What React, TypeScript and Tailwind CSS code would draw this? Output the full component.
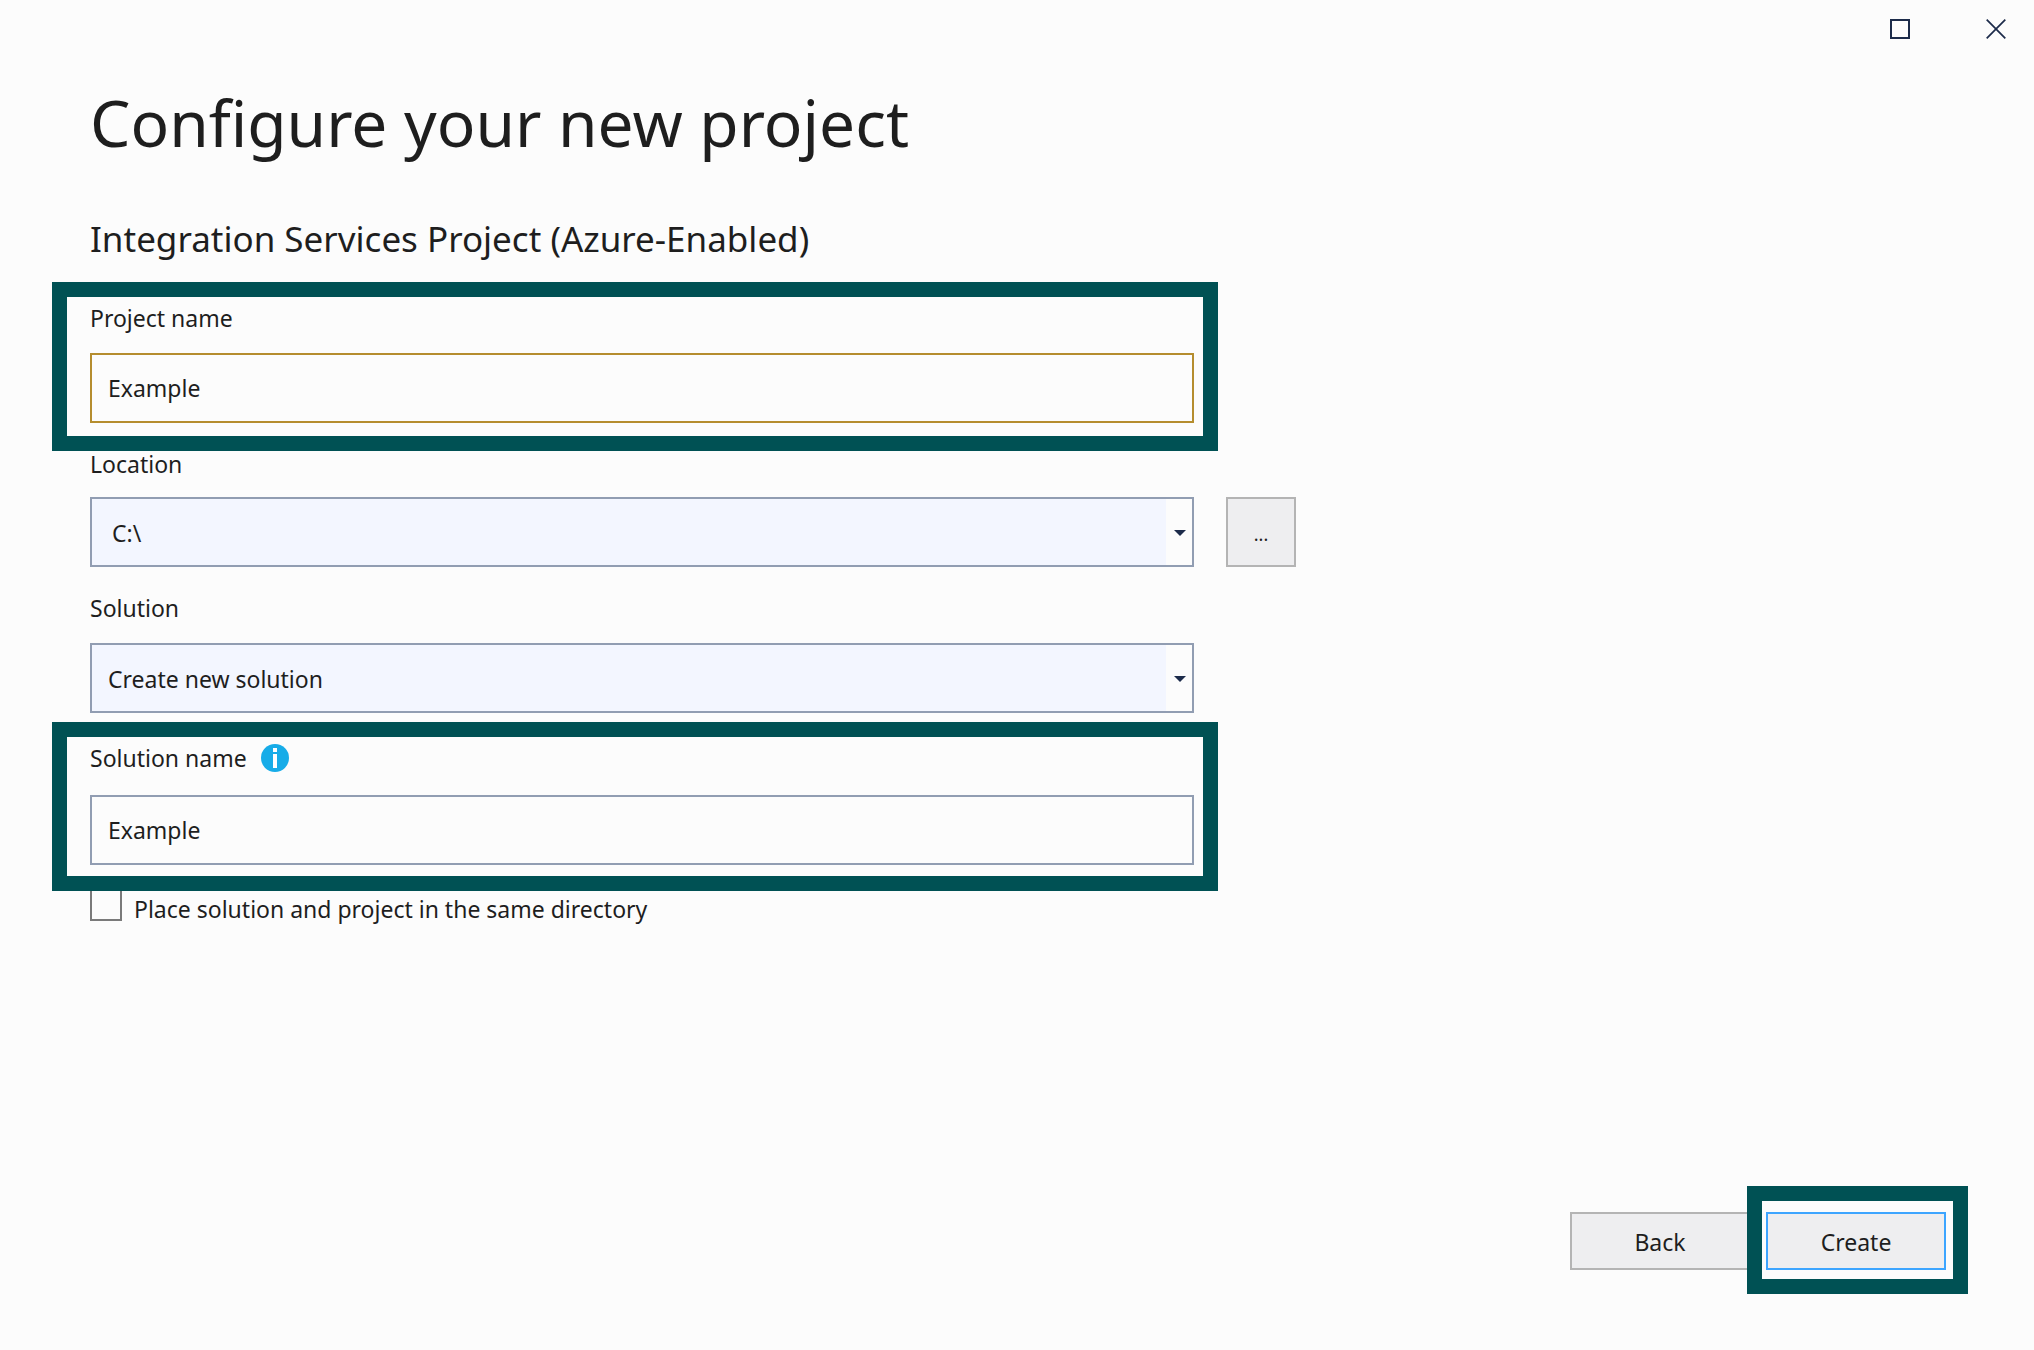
import React, { useState } from 'react'
import clsx from 'clsx'

const Highlight = ({ className }: { className: string }) => (
  <div
    aria-hidden="true"
    className={clsx('pointer-events-none absolute border-[15px] border-[#005154]', className)}
  />
)

const InfoIcon = () => (
  <svg width="28" height="28" viewBox="0 0 28 28" aria-hidden="true">
    <circle cx="14" cy="14" r="14" fill="#17ace8" />
    <path d="M12 4h4v4h-4zM12 10h4v14h-4z" fill="#fff" />
  </svg>
)

interface TextFieldProps {
  id: string
  value: string
  onChange: (value: string) => void
  className: string
}

const TextField = ({ id, value, onChange, className }: TextFieldProps) => (
  <input
    id={id}
    type="text"
    value={value}
    onChange={(e) => onChange(e.target.value)}
    className={clsx('h-[70px] w-full border-2 bg-[#fcfcfc] px-4 outline-none', className)}
  />
)

interface SelectFieldProps {
  id: string
  options: string[]
  className: string
}

const SelectField = ({ id, options, className }: SelectFieldProps) => (
  <div className="relative w-full">
    <select
      id={id}
      className={clsx(
        'block h-[70px] w-full appearance-none rounded-none border-2 border-[#919db2] bg-[#f3f6ff] pt-0.5 pr-8 outline-none',
        className
      )}
    >
      {options.map((option) => (
        <option key={option}>{option}</option>
      ))}
    </select>
    <div className="pointer-events-none absolute inset-y-0.5 right-0.5 flex w-[26px] items-center justify-center bg-[#fcfcfc] pt-0.5 pl-0.5">
      <svg width="12" height="6" viewBox="0 0 12 6" aria-hidden="true">
        <path d="M0 0h12L6 6z" fill="#1c2b4a" />
      </svg>
    </div>
  </div>
)

const App = () => {
  const [projectName, setProjectName] = useState('Example')
  const [solutionName, setSolutionName] = useState('Example')
  const [sameDirectory, setSameDirectory] = useState(false)

  return (
    <div className="flex min-h-screen flex-col bg-[#fcfcfc] font-['Noto_Sans','Open_Sans',sans-serif] text-[23px] leading-8 text-[#1e1e1e]">
      {/* Window controls */}
      <div className="flex h-[58px] justify-end gap-5">
        <button type="button" aria-label="Maximize" className="flex w-[76px] items-center justify-center">
          <svg width="20" height="20" viewBox="0 0 20 20" aria-hidden="true">
            <path d="M1 1h18v18H1z" fill="none" stroke="#1c2b4a" strokeWidth="2" />
          </svg>
        </button>
        <button type="button" aria-label="Close" className="flex w-[76px] items-center justify-center">
          <svg width="20" height="20" viewBox="0 0 20 20" aria-hidden="true">
            <path d="M.7.7l18.6 18.6M19.3.7L.7 19.3" fill="none" stroke="#1c2b4a" strokeWidth="1.7" />
          </svg>
        </button>
      </div>

      <main className="px-[90px] pt-[25px]">
        <h1 className="text-[64px] leading-[80px]">Configure your new project</h1>
        <h2 className="mt-[52px] text-[35px] leading-[48px]">Integration Services Project (Azure-Enabled)</h2>

        <form className="mt-[39px] w-full max-w-[1104px]">
          <div className="relative flex flex-col items-start gap-[19px]">
            <label htmlFor="project-name">Project name</label>
            <TextField
              id="project-name"
              value={projectName}
              onChange={setProjectName}
              className="border-[#b58d2e]"
            />
            <Highlight className="-top-5 -right-6 -bottom-7 -left-[38px]" />
          </div>

          <div className="mt-[25px] flex flex-col items-start gap-[17px]">
            <label htmlFor="location">Location</label>
            <div className="relative w-full">
              <SelectField id="location" options={['C:\\']} className="pl-5" />
              <button
                type="button"
                className="absolute top-0 left-full ml-8 h-[70px] w-[70px] border-2 border-[#b4b4b4] bg-[#eeeef0] pt-1 text-lg"
              >
                ...
              </button>
            </div>
          </div>

          <div className="mt-[25px] flex flex-col items-start gap-[19px]">
            <label htmlFor="solution">Solution</label>
            <SelectField id="solution" options={['Create new solution']} className="pl-4" />
          </div>

          <div className="relative z-10 mt-[29px] flex flex-col items-start gap-[21px]">
            <div className="flex items-center gap-[14px]">
              <label htmlFor="solution-name">Solution name</label>
              <InfoIcon />
            </div>
            <TextField
              id="solution-name"
              value={solutionName}
              onChange={setSolutionName}
              className="border-[#919db2]"
            />
            <Highlight className="-top-5 -right-6 -bottom-[26px] -left-[38px]" />
          </div>

          <div className="mt-6 flex gap-3">
            <input
              id="same-directory"
              type="checkbox"
              checked={sameDirectory}
              onChange={(e) => setSameDirectory(e.target.checked)}
              className="h-8 w-8 appearance-none border-2 border-[#7a7a7a] bg-[#fcfcfc] checked:bg-[#7a7a7a]"
            />
            <label htmlFor="same-directory" className="pt-1">
              Place solution and project in the same directory
            </label>
          </div>
        </form>
      </main>

      <footer className="mt-auto flex justify-end gap-4 pr-[88px] pb-20">
        <button type="button" className="h-[58px] w-[180px] border-2 border-[#b4b4b4] bg-[#eeeef0] pt-0.5">
          Back
        </button>
        <div className="relative">
          <button type="button" className="h-[58px] w-[180px] border-2 border-[#3da5ff] bg-[#eeeef0] pt-0.5">
            Create
          </button>
          <Highlight className="-top-[26px] -right-[22px] -bottom-6 -left-[19px]" />
        </div>
      </footer>
    </div>
  )
}

export default App
